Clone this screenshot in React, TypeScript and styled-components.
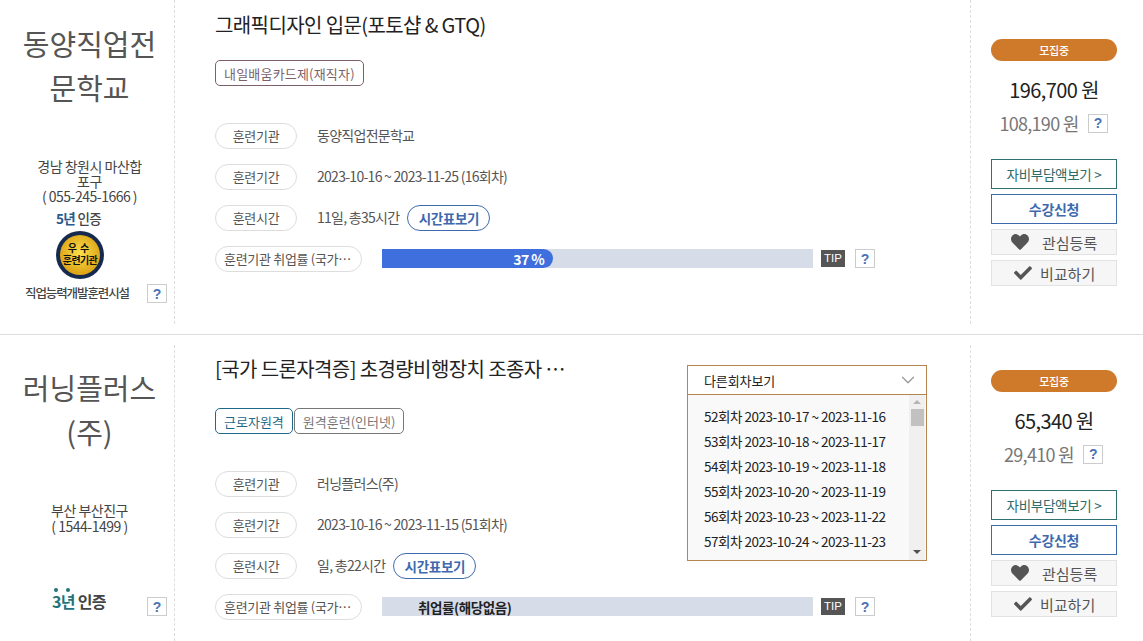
import React from "react";
import styled, { createGlobalStyle } from "styled-components";
import { FaHeart, FaCheck } from "react-icons/fa";
import { ChevronDown } from "lucide-react";

const Global = createGlobalStyle`
  html, body { margin: 0; padding: 0; background: #fff; }
  body { width: 1143px; height: 641px; overflow: hidden; font-family: "Noto Sans CJK KR", "Noto Sans", sans-serif; color: #444; }
  * { box-sizing: border-box; }
`;

const Page = styled.div`
  width: 1143px;
  height: 641px;
  overflow: hidden;
`;

const CourseRow = styled.section<{ $last?: boolean }>`
  display: grid;
  grid-template-columns: 175px 796px 172px;
  height: ${(p) => (p.$last ? "296px" : "324px")};
  margin-bottom: ${(p) => (p.$last ? "0" : "10px")};
  margin-top: ${(p) => (p.$last ? "10px" : "0")};
`;

const Divider = styled.hr`
  margin: 0;
  border: 0;
  height: 1px;
  background: #ddd;
`;

const InstituteCol = styled.div<{ $top: number }>`
  border-right: 1px dashed #ddd;
  padding: ${(p) => p.$top}px 0 0 5px;
  display: flex;
  flex-direction: column;
  align-items: center;
`;

const InstituteName = styled.h2`
  margin: 0;
  width: 140px;
  font-size: 29px;
  font-weight: 400;
  line-height: 44px;
  letter-spacing: 0;
  text-align: center;
  color: #555;
  word-break: break-all;
`;

const Address = styled.p<{ $gap: number; $lh: number }>`
  margin: ${(p) => p.$gap}px 0 0;
  width: 108px;
  font-size: 14px;
  line-height: ${(p) => p.$lh}px;
  letter-spacing: -0.5px;
  text-align: center;
  color: #444;
  word-break: break-all;
`;

const Cert = styled.div<{ $big?: boolean }>`
  margin-top: ${(p) => (p.$big ? "-4px" : "6px")};
  margin-left: ${(p) => (p.$big ? "27px" : "0")};
  font-size: ${(p) => (p.$big ? "16px" : "13.5px")};
  line-height: 16px;
  font-weight: ${(p) => (p.$big ? 700 : 500)};
  letter-spacing: -0.7px;
  color: #444;
  position: relative;
  align-self: ${(p) => (p.$big ? "flex-start" : "center")};
  margin-right: ${(p) => (p.$big ? "0" : "22px")};
`;

const CertYear = styled.span<{ $teal?: boolean }>`
  color: ${(p) => (p.$teal ? "#23727a" : "#2a5a8c")};
  font-weight: 700;
  position: relative;
`;

const CertDots = styled.span`
  position: absolute;
  top: -1px;
  left: 2px;
  display: flex;
  gap: 8px;
  & i { width: 4px; height: 4px; border-radius: 50%; background: #23727a; }
`;

const BadgeSvg = styled.svg`
  margin-top: 5px;
  margin-right: 20px;
  display: block;
`;

const FacilityRow = styled.div<{ $gap: number }>`
  margin-top: ${(p) => p.$gap}px;
  align-self: stretch;
  display: flex;
  align-items: flex-start;
  justify-content: space-between;
  padding: 0 7px 0 20px;
`;

const FacilityText = styled.span`
  margin-top: 1px;
  font-size: 12.5px;
  font-weight: 500;
  letter-spacing: -1.1px;
  color: #444;
  line-height: 16px;
`;

const Help = styled.span<{ $ml?: number; $mt?: number }>`
  flex: none;
  display: inline-flex;
  align-items: center;
  justify-content: center;
  width: 20px;
  height: 19px;
  margin-left: ${(p) => p.$ml ?? 0}px;
  margin-top: ${(p) => p.$mt ?? 0}px;
  border: 1px solid #ccc;
  font-family: "Liberation Sans", sans-serif;
  font-size: 14px;
  font-weight: 700;
  color: #4a72b8;
  background: #fff;
`;

const CenterCol = styled.div<{ $top: number }>`
  position: relative;
  border-right: 1px dashed #ddd;
  padding: ${(p) => p.$top}px 0 0 40px;
`;

const Title = styled.h3`
  margin: 0;
  width: 352px;
  height: 30px;
  font-size: 20px;
  font-weight: 400;
  line-height: 30px;
  letter-spacing: -0.6px;
  color: #222;
  white-space: nowrap;
  overflow: hidden;
  text-overflow: ellipsis;
`;

const TitleWide = styled(Title)`
  width: 500px;
`;

const Tags = styled.div<{ $gap: number }>`
  display: flex;
  gap: 1px;
  margin: ${(p) => p.$gap}px 0 37px;
`;

const Tag = styled.span<{ $color: string; $ls?: number }>`
  display: inline-flex;
  align-items: center;
  height: 26px;
  padding: 0 8px;
  border: 1px solid ${(p) => p.$color};
  border-radius: 5px;
  font-size: 13px;
  letter-spacing: ${(p) => p.$ls ?? 0}px;
  color: ${(p) => p.$color};
  white-space: nowrap;
`;

const Field = styled.div<{ $bar?: boolean }>`
  display: flex;
  align-items: ${(p) => (p.$bar ? "flex-start" : "center")};
  height: 26px;
  margin-bottom: 15px;
`;

const FieldLabel = styled.span<{ $wide?: boolean }>`
  flex: none;
  width: ${(p) => (p.$wide ? "147px" : "82px")};
  height: 26px;
  border: 1px solid #ddd;
  border-radius: 13px;
  display: block;
  padding: 0 ${(p) => (p.$wide ? "8px" : "0")};
  text-align: ${(p) => (p.$wide ? "left" : "center")};
  font-size: 13px;
  line-height: 24px;
  letter-spacing: -0.3px;
  color: #555;
  white-space: nowrap;
  overflow: hidden;
  text-overflow: ellipsis;
`;

const FieldValue = styled.span`
  margin: -2px 0 0 20px;
  font-size: 14px;
  letter-spacing: -0.72px;
  color: #555;
  white-space: nowrap;
`;

const TimeButton = styled.span`
  display: inline-flex;
  align-items: center;
  justify-content: center;
  height: 26px;
  width: 83px;
  margin-left: 8px;
  border: 1px solid #3f69ad;
  border-radius: 13px;
  font-size: 13.5px;
  font-weight: 700;
  letter-spacing: -0.3px;
  color: #3f69ad;
`;

const BarTrack = styled.div`
  position: relative;
  flex: none;
  width: 431px;
  height: 19px;
  margin: 3px 0 0 20px;
  background: #d6dce8;
`;

const BarFill = styled.div`
  height: 100%;
  background: #3f6fdc;
  border-radius: 0 10px 10px 0;
  display: flex;
  align-items: center;
  justify-content: flex-end;
  padding-right: 9px;
  font-size: 14px;
  font-weight: 700;
  letter-spacing: -0.6px;
  color: #fff;
`;

const BarEmpty = styled.div`
  height: 100%;
  padding-left: 36px;
  display: flex;
  align-items: center;
  font-size: 13.5px;
  font-weight: 700;
  letter-spacing: -0.4px;
  color: #222;
`;

const Tip = styled.span`
  flex: none;
  margin: 4px 0 0 8px;
  width: 24px;
  height: 17px;
  background: #555;
  color: #fff;
  font-family: "Liberation Sans", sans-serif;
  font-size: 11.5px;
  font-weight: 400;
  line-height: 17px;
  text-align: center;
`;

const Dropdown = styled.div`
  position: absolute;
  left: 512px;
  top: 20px;
  width: 240px;
  height: 196px;
  border: 1px solid #b5854f;
  background: #fff;
  display: flex;
  flex-direction: column;
`;

const DropdownHead = styled.div`
  flex: none;
  height: 29px;
  padding: 0 7px 0 16px;
  border-bottom: 1px solid #b5854f;
  display: flex;
  align-items: center;
  justify-content: space-between;
  font-size: 13px;
  letter-spacing: -0.1px;
  color: #222;
  & svg { color: #999; }
`;

const DropdownBody = styled.div`
  flex: 1;
  min-height: 0;
  display: flex;
  background: #f9f9fa;
`;

const OptionList = styled.ul`
  flex: 1;
  margin: 0;
  padding: 9px 0 0 16px;
  list-style: none;
`;

const Option = styled.li`
  height: 25px;
  line-height: 25px;
  font-size: 13.5px;
  letter-spacing: -0.48px;
  color: #222;
  white-space: nowrap;
`;

const ScrollTrack = styled.div`
  flex: none;
  width: 16px;
  margin-right: 1px;
  background: #f0f0f0;
  display: flex;
  flex-direction: column;
  align-items: center;
  padding-top: 5px;
`;

const ScrollThumb = styled.div`
  width: 13px;
  height: 17px;
  margin-top: 5px;
  background: #c1c1c1;
`;

const ArrowUp = styled.span`
  width: 0;
  height: 0;
  border-left: 4px solid transparent;
  border-right: 4px solid transparent;
  border-bottom: 4px solid #b5b5b5;
`;

const ArrowDown = styled.span`
  margin-top: auto;
  margin-bottom: 6px;
  width: 0;
  height: 0;
  border-left: 4px solid transparent;
  border-right: 4px solid transparent;
  border-top: 4px solid #505050;
`;

const ActionCol = styled.div<{ $top: number }>`
  padding: ${(p) => p.$top}px 0 0 20px;
  display: flex;
  flex-direction: column;
  width: 146px;
`;

const StatusPill = styled.div`
  height: 22px;
  border-radius: 11px;
  background: #cf7a2b;
  color: #fff;
  font-size: 11px;
  font-weight: 500;
  line-height: 22px;
  letter-spacing: -0.3px;
  text-align: center;
`;

const Price = styled.div`
  margin-top: 14px;
  height: 30px;
  line-height: 30px;
  text-align: center;
  font-size: 20px;
  letter-spacing: -0.6px;
  color: #222;
`;

const SubPrice = styled.div`
  margin-top: 3px;
  height: 30px;
  padding-right: 1px;
  display: flex;
  align-items: center;
  justify-content: center;
  font-size: 18px;
  letter-spacing: -0.7px;
  color: #777;
  white-space: nowrap;
`;

const OutlineButton = styled.div<{ $color: string; $text: string; $bold?: boolean; $top: number }>`
  height: 30px;
  margin-top: ${(p) => p.$top}px;
  border: 1px solid ${(p) => p.$color};
  color: ${(p) => p.$text};
  display: flex;
  align-items: center;
  justify-content: center;
  font-size: ${(p) => (p.$bold ? "14px" : "13.5px")};
  font-weight: ${(p) => (p.$bold ? 700 : 400)};
  letter-spacing: -0.3px;
`;

const GrayButton = styled.div<{ $pad: number; $gap: number }>`
  height: 26px;
  margin-top: 5px;
  border: 1px solid #e2e2e2;
  background: #f6f6f7;
  color: #555;
  display: flex;
  align-items: center;
  padding-left: ${(p) => p.$pad}px;
  gap: ${(p) => p.$gap}px;
  font-size: 15px;
  letter-spacing: 0;
  & svg { color: #555; flex: none; }
`;

const Badge = () => (
  <BadgeSvg width="48" height="48" viewBox="0 0 48 48">
    <defs>
      <radialGradient id="gold" cx="50%" cy="45%" r="60%">
        <stop offset="0%" stopColor="#fbe04a" />
        <stop offset="100%" stopColor="#d99c10" />
      </radialGradient>
    </defs>
    <circle cx="24" cy="24" r="24" fill="#16294f" />
    <circle cx="24" cy="24" r="20" fill="url(#gold)" />
    <text x="24" y="21" textAnchor="middle" fontSize="10" fontWeight="700" fill="#111" letterSpacing="3" fontFamily="Noto Sans CJK KR">우수</text>
    <text x="24" y="33" textAnchor="middle" fontSize="10" fontWeight="700" fill="#111" letterSpacing="-0.6" fontFamily="Noto Sans CJK KR">훈련기관</text>
  </BadgeSvg>
);

const Actions = ({ price, sub, top }: { price: string; sub: string; top: number }) => (
  <ActionCol $top={top}>
    <StatusPill>모집중</StatusPill>
    <Price>{price}</Price>
    <SubPrice>
      {sub}
      <Help $ml={9}>?</Help>
    </SubPrice>
    <OutlineButton $color="#2f7070" $text="#2f6a6a" $top={21}>자비부담액보기 &gt;</OutlineButton>
    <OutlineButton $color="#3f69ad" $text="#3f69ad" $bold $top={5}>수강신청</OutlineButton>
    <GrayButton $pad={19} $gap={13}><FaHeart size={18} />관심등록</GrayButton>
    <GrayButton $pad={22} $gap={8}><FaCheck size={18} />비교하기</GrayButton>
  </ActionCol>
);

const options = [
  "52회차 2023-10-17 ~ 2023-11-16",
  "53회차 2023-10-18 ~ 2023-11-17",
  "54회차 2023-10-19 ~ 2023-11-18",
  "55회차 2023-10-20 ~ 2023-11-19",
  "56회차 2023-10-23 ~ 2023-11-22",
  "57회차 2023-10-24 ~ 2023-11-23",
];

export default function App() {
  return (
    <Page>
      <Global />
      <CourseRow>
        <InstituteCol $top={21}>
          <InstituteName>동양직업전문학교</InstituteName>
          <Address $gap={50} $lh={15}>경남 창원시 마산합포구<br />( 055-245-1666 )</Address>
          <Cert><CertYear>5년</CertYear> 인증</Cert>
          <Badge />
          <FacilityRow $gap={5}>
            <FacilityText>직업능력개발훈련시설</FacilityText>
            <Help>?</Help>
          </FacilityRow>
        </InstituteCol>
        <CenterCol $top={10}>
          <TitleWide>그래픽디자인 입문(포토샵 &amp; GTQ)</TitleWide>
          <Tags $gap={20}><Tag $color="#7c5f6c" $ls={0.2}>내일배움카드제(재직자)</Tag></Tags>
          <Field><FieldLabel>훈련기관</FieldLabel><FieldValue>동양직업전문학교</FieldValue></Field>
          <Field><FieldLabel>훈련기간</FieldLabel><FieldValue>2023-10-16 ~ 2023-11-25 (16회차)</FieldValue></Field>
          <Field><FieldLabel>훈련시간</FieldLabel><FieldValue>11일, 총35시간</FieldValue><TimeButton>시간표보기</TimeButton></Field>
          <Field $bar>
            <FieldLabel $wide>훈련기관 취업률 (국가기술자격)</FieldLabel>
            <BarTrack><BarFill style={{ width: "39.7%" }}>37 %</BarFill></BarTrack>
            <Tip>TIP</Tip>
            <Help $ml={10} $mt={3}>?</Help>
          </Field>
        </CenterCol>
        <Actions price="196,700 원" sub="108,190 원" top={39} />
      </CourseRow>
      <Divider />
      <CourseRow $last>
        <InstituteCol $top={20}>
          <InstituteName>러닝플러스(주)</InstituteName>
          <Address $gap={49} $lh={16}>부산 부산진구<br />( 1544-1499 )</Address>
          <FacilityRow $gap={63}>
            <Cert $big><CertYear $teal><CertDots><i /><i /></CertDots>3년</CertYear> 인증</Cert>
            <Help>?</Help>
          </FacilityRow>
        </InstituteCol>
        <CenterCol $top={9}>
          <Title>[국가 드론자격증] 초경량비행장치 조종자 자격증 취득과정</Title>
          <Tags $gap={24}>
            <Tag $color="#1f6a8a">근로자원격</Tag>
            <Tag $color="#777">원격훈련(인터넷)</Tag>
          </Tags>
          <Field><FieldLabel>훈련기관</FieldLabel><FieldValue>러닝플러스(주)</FieldValue></Field>
          <Field><FieldLabel>훈련기간</FieldLabel><FieldValue>2023-10-16 ~ 2023-11-15 (51회차)</FieldValue></Field>
          <Field><FieldLabel>훈련시간</FieldLabel><FieldValue>일, 총22시간</FieldValue><TimeButton>시간표보기</TimeButton></Field>
          <Field $bar>
            <FieldLabel $wide>훈련기관 취업률 (국가기술자격)</FieldLabel>
            <BarTrack><BarEmpty>취업률(해당없음)</BarEmpty></BarTrack>
            <Tip>TIP</Tip>
            <Help $ml={10} $mt={3}>?</Help>
          </Field>
          <Dropdown>
            <DropdownHead>다른회차보기<ChevronDown size={22} strokeWidth={1.4} /></DropdownHead>
            <DropdownBody>
              <OptionList>
                {options.map((o) => <Option key={o}>{o}</Option>)}
              </OptionList>
              <ScrollTrack><ArrowUp /><ScrollThumb /><ArrowDown /></ScrollTrack>
            </DropdownBody>
          </Dropdown>
        </CenterCol>
        <Actions price="65,340 원" sub="29,410 원" top={25} />
      </CourseRow>
    </Page>
  );
}
